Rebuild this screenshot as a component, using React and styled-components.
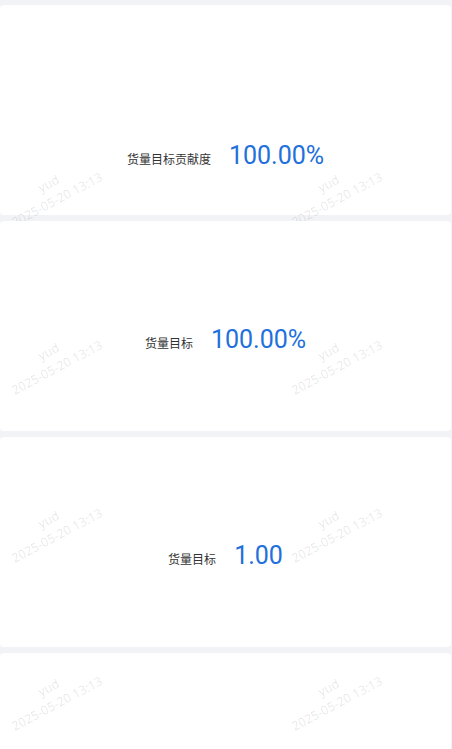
import React from 'react';
import styled, {createGlobalStyle} from 'styled-components';

const GlobalStyle = createGlobalStyle`
html, body {
  margin: 0;
  padding: 0;
  background: #f2f3f7;
  overflow: hidden;
}
body {
  font-family: Roboto, "Noto Sans CJK SC", sans-serif;
}
`;

// page is scrolled: first card sits above the viewport
const List = styled.div`
display: flex;
flex-direction: column;
gap: 6px;
margin-top: -211px;
padding-right: 1px;
`;

const Card = styled.div`
position: relative;
height: 210px;
box-sizing: border-box;
padding-top: ${props => props.offset}px;
background: #fff;
border-radius: 4px;
`;

const Metric = styled.div`
display: flex;
align-items: baseline;
justify-content: center;
gap: 18px;
height: 34px;
`;

const Label = styled.span`
font-family: "Noto Sans CJK SC", sans-serif;
font-size: 12px;
color: #333;
`;

const Value = styled.span`
font-family: Roboto, sans-serif;
font-size: 25px;
line-height: 34px;
color: #2170dc;
`;

const Mark = styled.div`
position: absolute;
width: 130px;
margin-left: -65px;
margin-top: -18px;
line-height: 18px;
text-align: center;
font-family: "Open Sans", sans-serif;
font-size: 12.5px;
color: rgba(0, 0, 0, 0.11);
white-space: nowrap;
transform: rotate(-28deg);
pointer-events: none;
user-select: none;
`;

const CARD_H = 210;
const GAP = 6;
const FIRST_TOP = -211;
const MARK_STEP = 168;
const MARK_Y0 = 24;
const MARK_X = [53, 333];

const cards = [
  {label: '货量目标', value: '100.00%', offset: 102},
  {label: '货量目标贡献度', value: '100.00%', offset: 134},
  {label: '货量目标', value: '100.00%', offset: 102},
  {label: '货量目标', value: '1.00', offset: 102},
  {label: '货量目标', value: '1.00', offset: 102},
];

function marksFor(index) {
  const top = FIRST_TOP + index * (CARD_H + GAP);
  let out = [];
  for (let k = -2; k < 8; k++) {
    const rel = MARK_Y0 + k * MARK_STEP - top;
    if (rel >= 30 && rel < 260) out.push(rel);
  }
  return out;
}

function Watermark({index}) {
  return marksFor(index).map(y =>
    MARK_X.map(x => (
      <Mark key={x + '-' + y} style={{left: x, top: y}}>
        <div>yud</div>
        <div>2025-05-20 13:13</div>
      </Mark>
    ))
  );
}

export default function App() {
  return (
    <>
      <GlobalStyle />
      <List>
        {cards.map((c, i) => (
          <Card key={i} offset={c.offset}>
            <Metric>
              <Label>{c.label}</Label>
              <Value>{c.value}</Value>
            </Metric>
            <Watermark index={i} />
          </Card>
        ))}
      </List>
    </>
  );
}
